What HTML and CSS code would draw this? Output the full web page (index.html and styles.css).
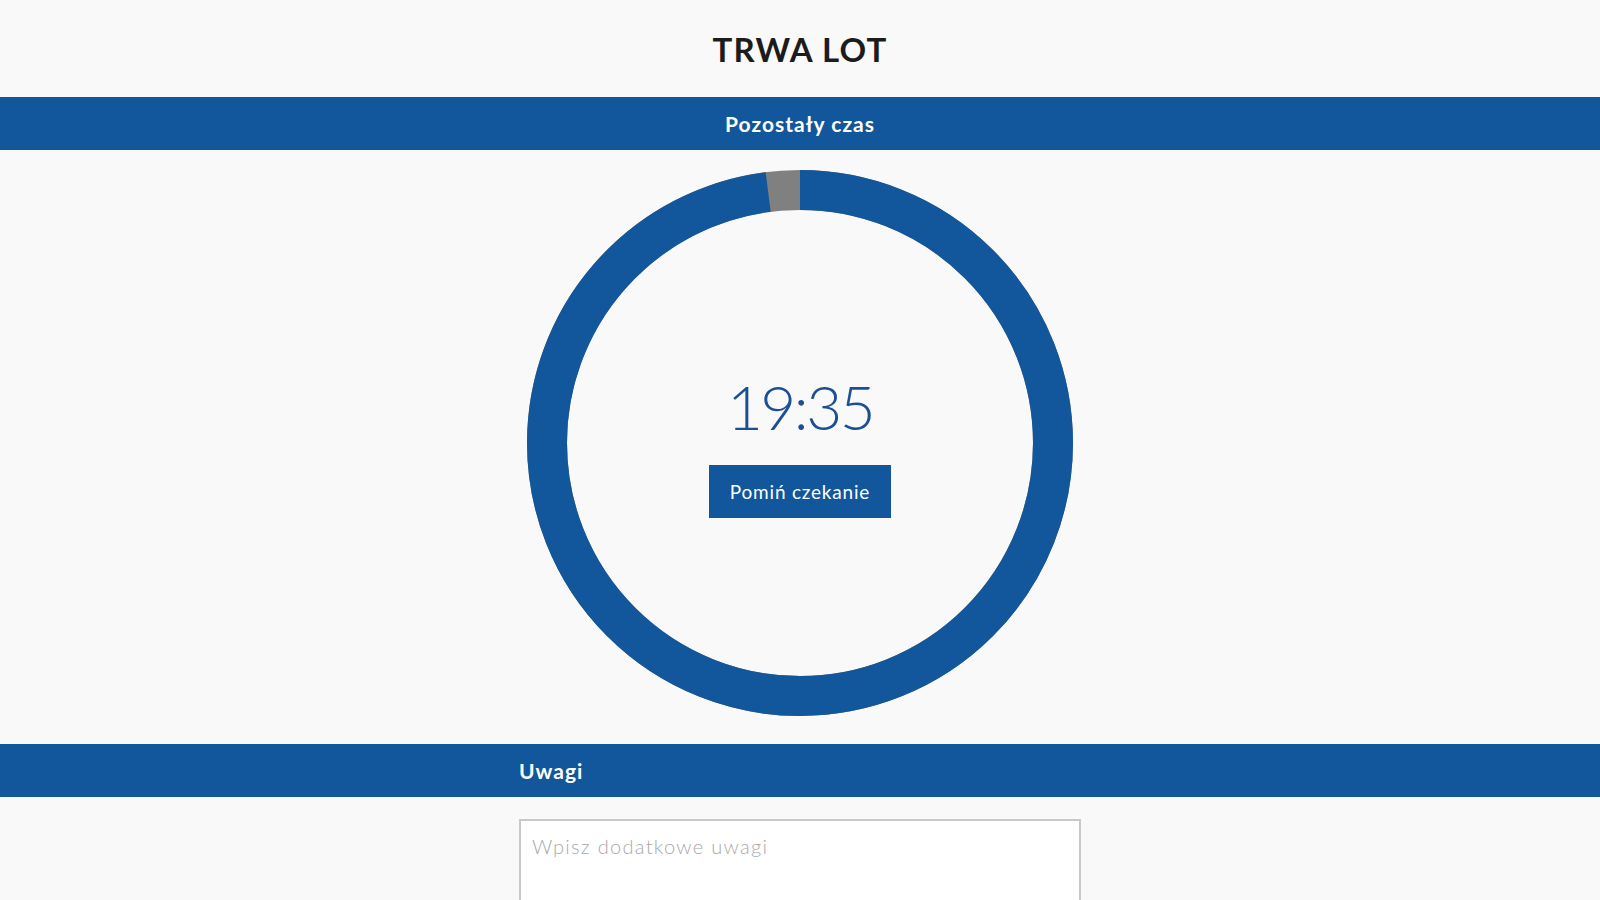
FILE: index.html
```html
<!DOCTYPE html>
<html lang="pl">
<head>
<meta charset="utf-8">
<title>Trwa lot</title>
<link rel="stylesheet" href="styles.css">
</head>
<body>
<header class="header">
  <h1 class="title">TRWA LOT</h1>
</header>
<div class="bar bar-center">Pozostały czas</div>
<section class="timer-section">
  <div class="timer">
    <svg class="ring" width="546" height="546" viewBox="0 0 546 546">
      <circle cx="273" cy="273" r="253" fill="none" stroke="#808080" stroke-width="40"/>
      <circle cx="273" cy="273" r="253" fill="none" stroke="#12569b" stroke-width="40" stroke-dasharray="1557 1589.6" transform="rotate(-90 273 273)"/>
    </svg>
    <div class="timer-content">
      <div class="time">19:35</div>
      <button class="skip">Pomiń czekanie</button>
    </div>
  </div>
</section>
<div class="bar">
  <div class="bar-inner">Uwagi</div>
</div>
<section class="notes">
  <textarea class="notes-input" placeholder="Wpisz dodatkowe uwagi"></textarea>
</section>
</body>
</html>
```

FILE: styles.css
```css
html, body {
  margin: 0;
  padding: 0;
}
body {
  background: #f9f9f9;
  font-family: Lato, "Open Sans", sans-serif;
  overflow: hidden;
  height: 900px;
}
.header {
  height: 97px;
  display: flex;
  align-items: center;
  justify-content: center;
}
.title {
  margin: 0;
  font-size: 33px;
  font-weight: 700;
  letter-spacing: 1.2px;
  color: #1c1c1c;
  padding-top: 1px;
}
.bar {
  background: #12569b;
  height: 53px;
  display: flex;
  align-items: center;
  color: #ffffff;
  font-weight: 700;
  font-size: 21px;
  letter-spacing: 1px;
}
.bar-center {
  justify-content: center;
}
.bar-inner {
  width: 562px;
  margin: 0 auto;
}
.timer-section {
  display: flex;
  justify-content: center;
  padding: 20px 0 28px;
}
.timer {
  display: grid;
  place-items: center;
  width: 546px;
  height: 546px;
}
.ring, .timer-content {
  grid-area: 1 / 1;
}
.ring {
  display: block;
}
.timer-content {
  display: flex;
  flex-direction: column;
  align-items: center;
  gap: 21px;
}
.time {
  font-size: 62px;
  line-height: 76px;
  font-weight: 300;
  color: #1d4f94;
  letter-spacing: -2.5px;
}
.skip {
  width: 182px;
  height: 53px;
  border: none;
  background: #12569b;
  color: #ffffff;
  font-family: Lato, "Open Sans", sans-serif;
  font-size: 19px;
  letter-spacing: 0.8px;
  padding: 0;
  cursor: pointer;
}
.notes {
  display: flex;
  justify-content: center;
  padding-top: 22px;
}
.notes-input {
  box-sizing: border-box;
  width: 562px;
  height: 140px;
  border: 2px solid #c9c9c9;
  background: #ffffff;
  padding: 13px 11px;
  font-family: Lato, "Open Sans", sans-serif;
  font-size: 20px;
  font-weight: 300;
  resize: none;
  outline: none;
}
.notes-input::placeholder {
  color: #a9a9a9;
  letter-spacing: 1.3px;
}
```
